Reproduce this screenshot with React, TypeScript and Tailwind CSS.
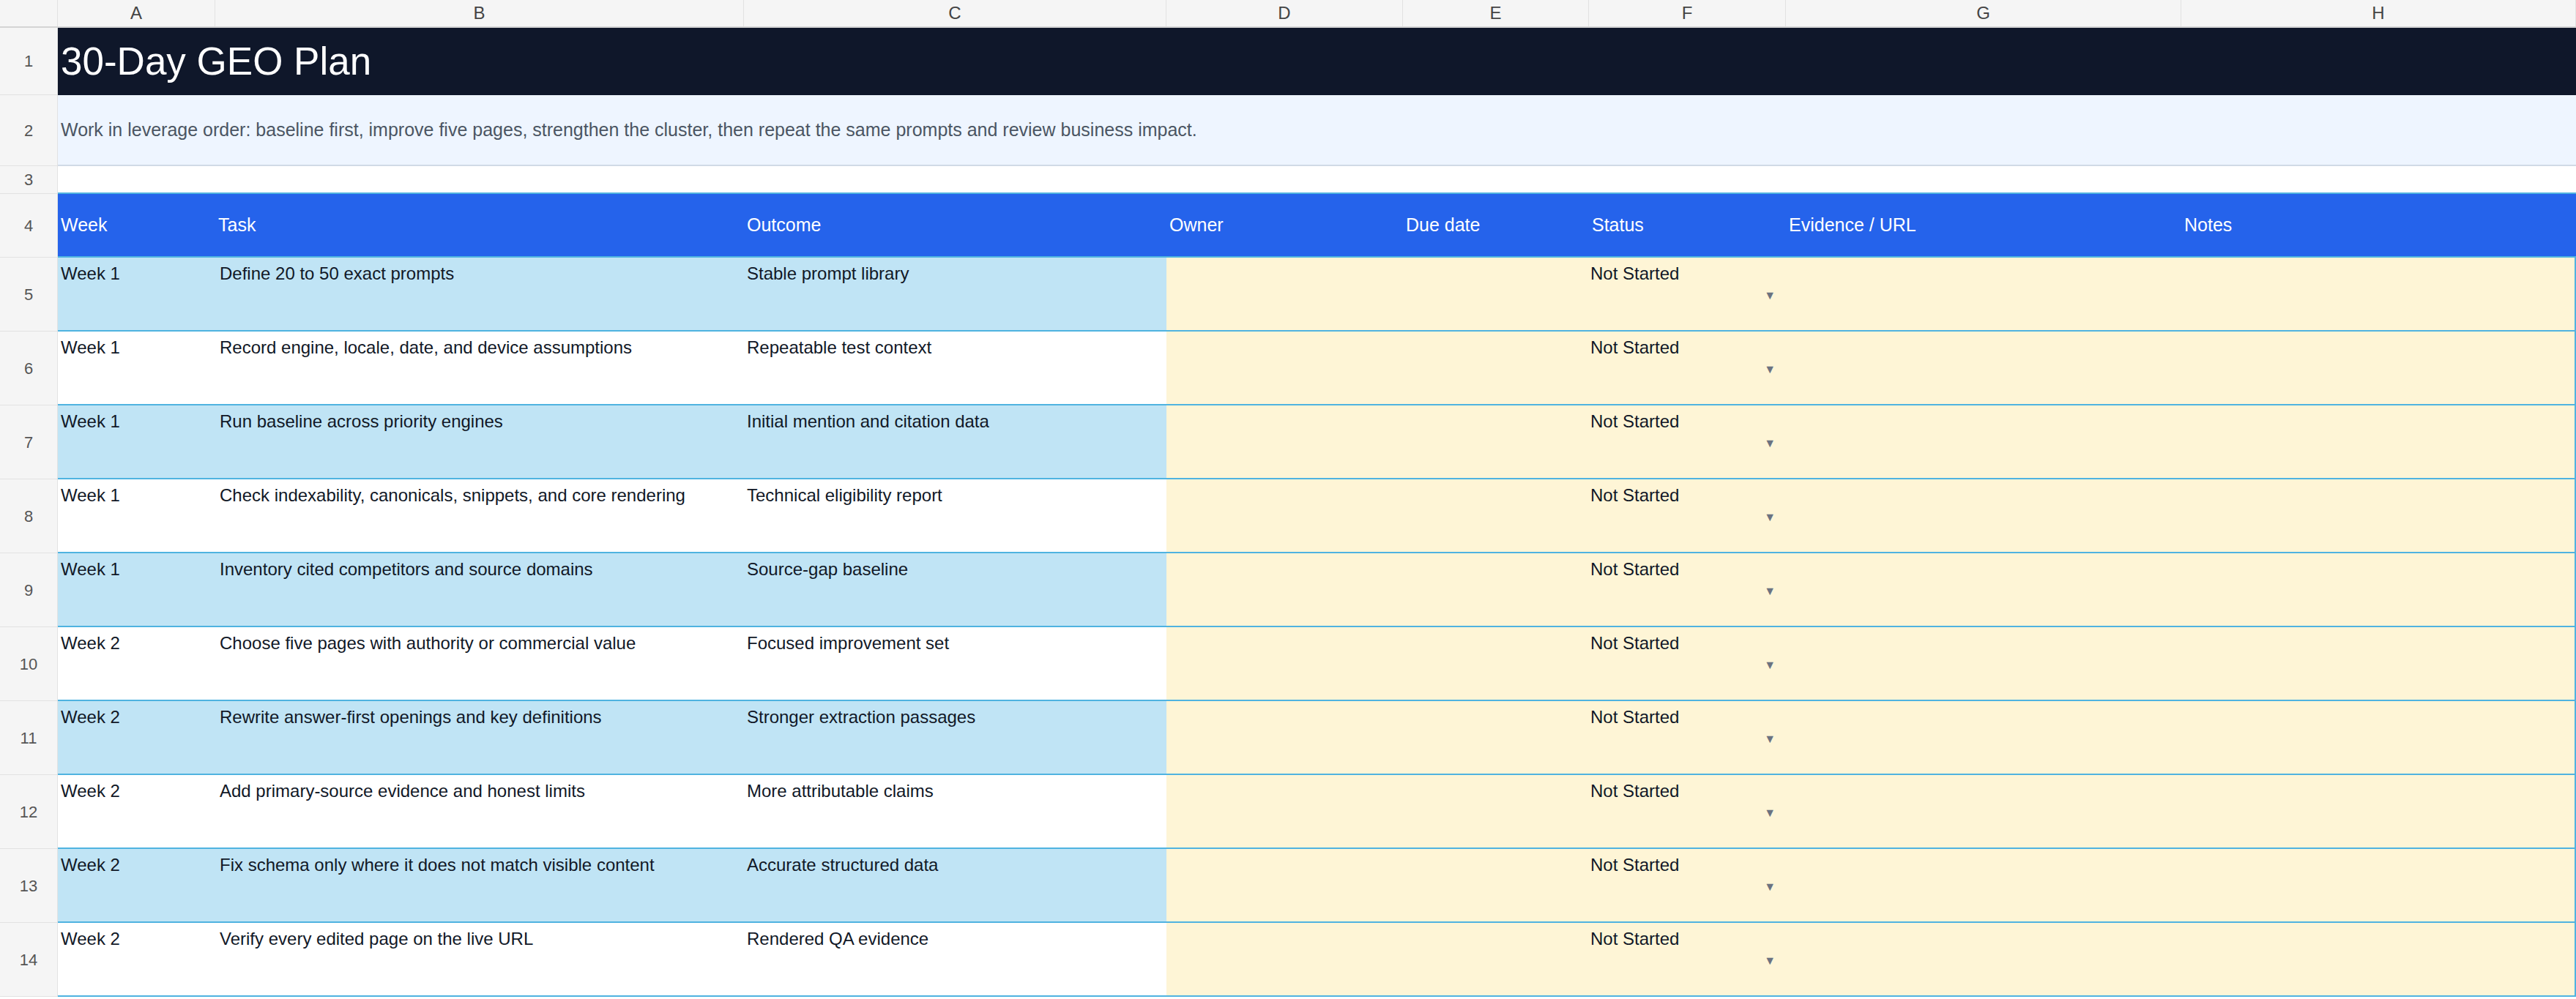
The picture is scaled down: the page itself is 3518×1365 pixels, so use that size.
const cols = "grid grid-cols-[79px_215px_722px_577px_323px_254px_269px_540px_539px]";

const tasks: [string, string, string][] = [
  ["Week 1", "Define 20 to 50 exact prompts", "Stable prompt library"],
  ["Week 1", "Record engine, locale, date, and device assumptions", "Repeatable test context"],
  ["Week 1", "Run baseline across priority engines", "Initial mention and citation data"],
  ["Week 1", "Check indexability, canonicals, snippets, and core rendering", "Technical eligibility report"],
  ["Week 1", "Inventory cited competitors and source domains", "Source-gap baseline"],
  ["Week 2", "Choose five pages with authority or commercial value", "Focused improvement set"],
  ["Week 2", "Rewrite answer-first openings and key definitions", "Stronger extraction passages"],
  ["Week 2", "Add primary-source evidence and honest limits", "More attributable claims"],
  ["Week 2", "Fix schema only where it does not match visible content", "Accurate structured data"],
  ["Week 2", "Verify every edited page on the live URL", "Rendered QA evidence"],
];

function RowNum({ n, h }: { n: number; h: string }) {
  return (
    <div className={`${h} flex items-center justify-center border-b border-r border-[#e2e2e2] bg-[#f5f5f5] text-[22px] text-[#555]`}>
      {n}
    </div>
  );
}

export default function App() {
  return (
    <div className="h-[1365px] w-[3518px] overflow-hidden bg-white text-[24px] text-[#111827]" style={{ fontFamily: '"Liberation Sans", Arial, sans-serif' }}>
      <div className={`${cols} h-[38px] border-b-2 border-[#d4d4d4] bg-[#f5f5f5] text-[24px] text-[#444]`}>
        {["", "A", "B", "C", "D", "E", "F", "G", "H"].map((c, i) => (
          <div key={i} className="flex items-center justify-center border-r border-[#e2e2e2]">{c}</div>
        ))}
      </div>
      <div className={cols}>
        <RowNum n={1} h="h-[92px]" />
        <div className="col-span-8 flex items-center bg-[#0f172a] pl-[4px] text-[53px] text-white">30-Day GEO Plan</div>
      </div>
      <div className={cols}>
        <RowNum n={2} h="h-[97px]" />
        <div className="col-span-8 flex items-center border-b-2 border-[#d0dae6] bg-[#eef5ff] pl-[4px] text-[25px] text-[#4b5563]">
          Work in leverage order: baseline first, improve five pages, strengthen the cluster, then repeat the same prompts and review business impact.
        </div>
      </div>
      <div className={cols}>
        <RowNum n={3} h="h-[38px]" />
        <div className="col-span-8 border-b-2 border-[#4fb3e0]" />
      </div>
      <div className={cols}>
        <RowNum n={4} h="h-[87px]" />
        {["Week", "Task", "Outcome", "Owner", "Due date", "Status", "Evidence / URL", "Notes"].map((t) => (
          <div key={t} className="flex items-center border-b-2 border-[#4fb3e0] bg-[#2563eb] pl-[4px] text-[25px] text-white">{t}</div>
        ))}
      </div>
      {tasks.map(([w, t, o], i) => {
        const blue = i % 2 === 0 ? "bg-[#c0e4f5]" : "bg-white";
        return (
          <div key={i} className={cols}>
            <RowNum n={i + 5} h="h-[101px]" />
            <div className={`${blue} border-b-2 border-[#4fb3e0] pl-[4px] pt-[4px]`}>{w}</div>
            <div className={`${blue} border-b-2 border-[#4fb3e0] pl-[6px] pt-[4px]`}>{t}</div>
            <div className={`${blue} border-b-2 border-[#4fb3e0] pl-[4px] pt-[4px]`}>{o}</div>
            <div className="border-b-2 border-[#4fb3e0] bg-[#fef5d6]" />
            <div className="border-b-2 border-[#4fb3e0] bg-[#fef5d6]" />
            <div className="relative border-b-2 border-[#4fb3e0] bg-[#fef5d6] pl-[2px] pt-[4px]">
              Not Started
              <span className="absolute right-[14px] top-[40px] text-[16px] text-[#6b7280]">▼</span>
            </div>
            <div className="border-b-2 border-[#4fb3e0] bg-[#fef5d6]" />
            <div className="border-b-2 border-r-2 border-[#4fb3e0] bg-[#fef5d6]" />
          </div>
        );
      })}
    </div>
  );
}
